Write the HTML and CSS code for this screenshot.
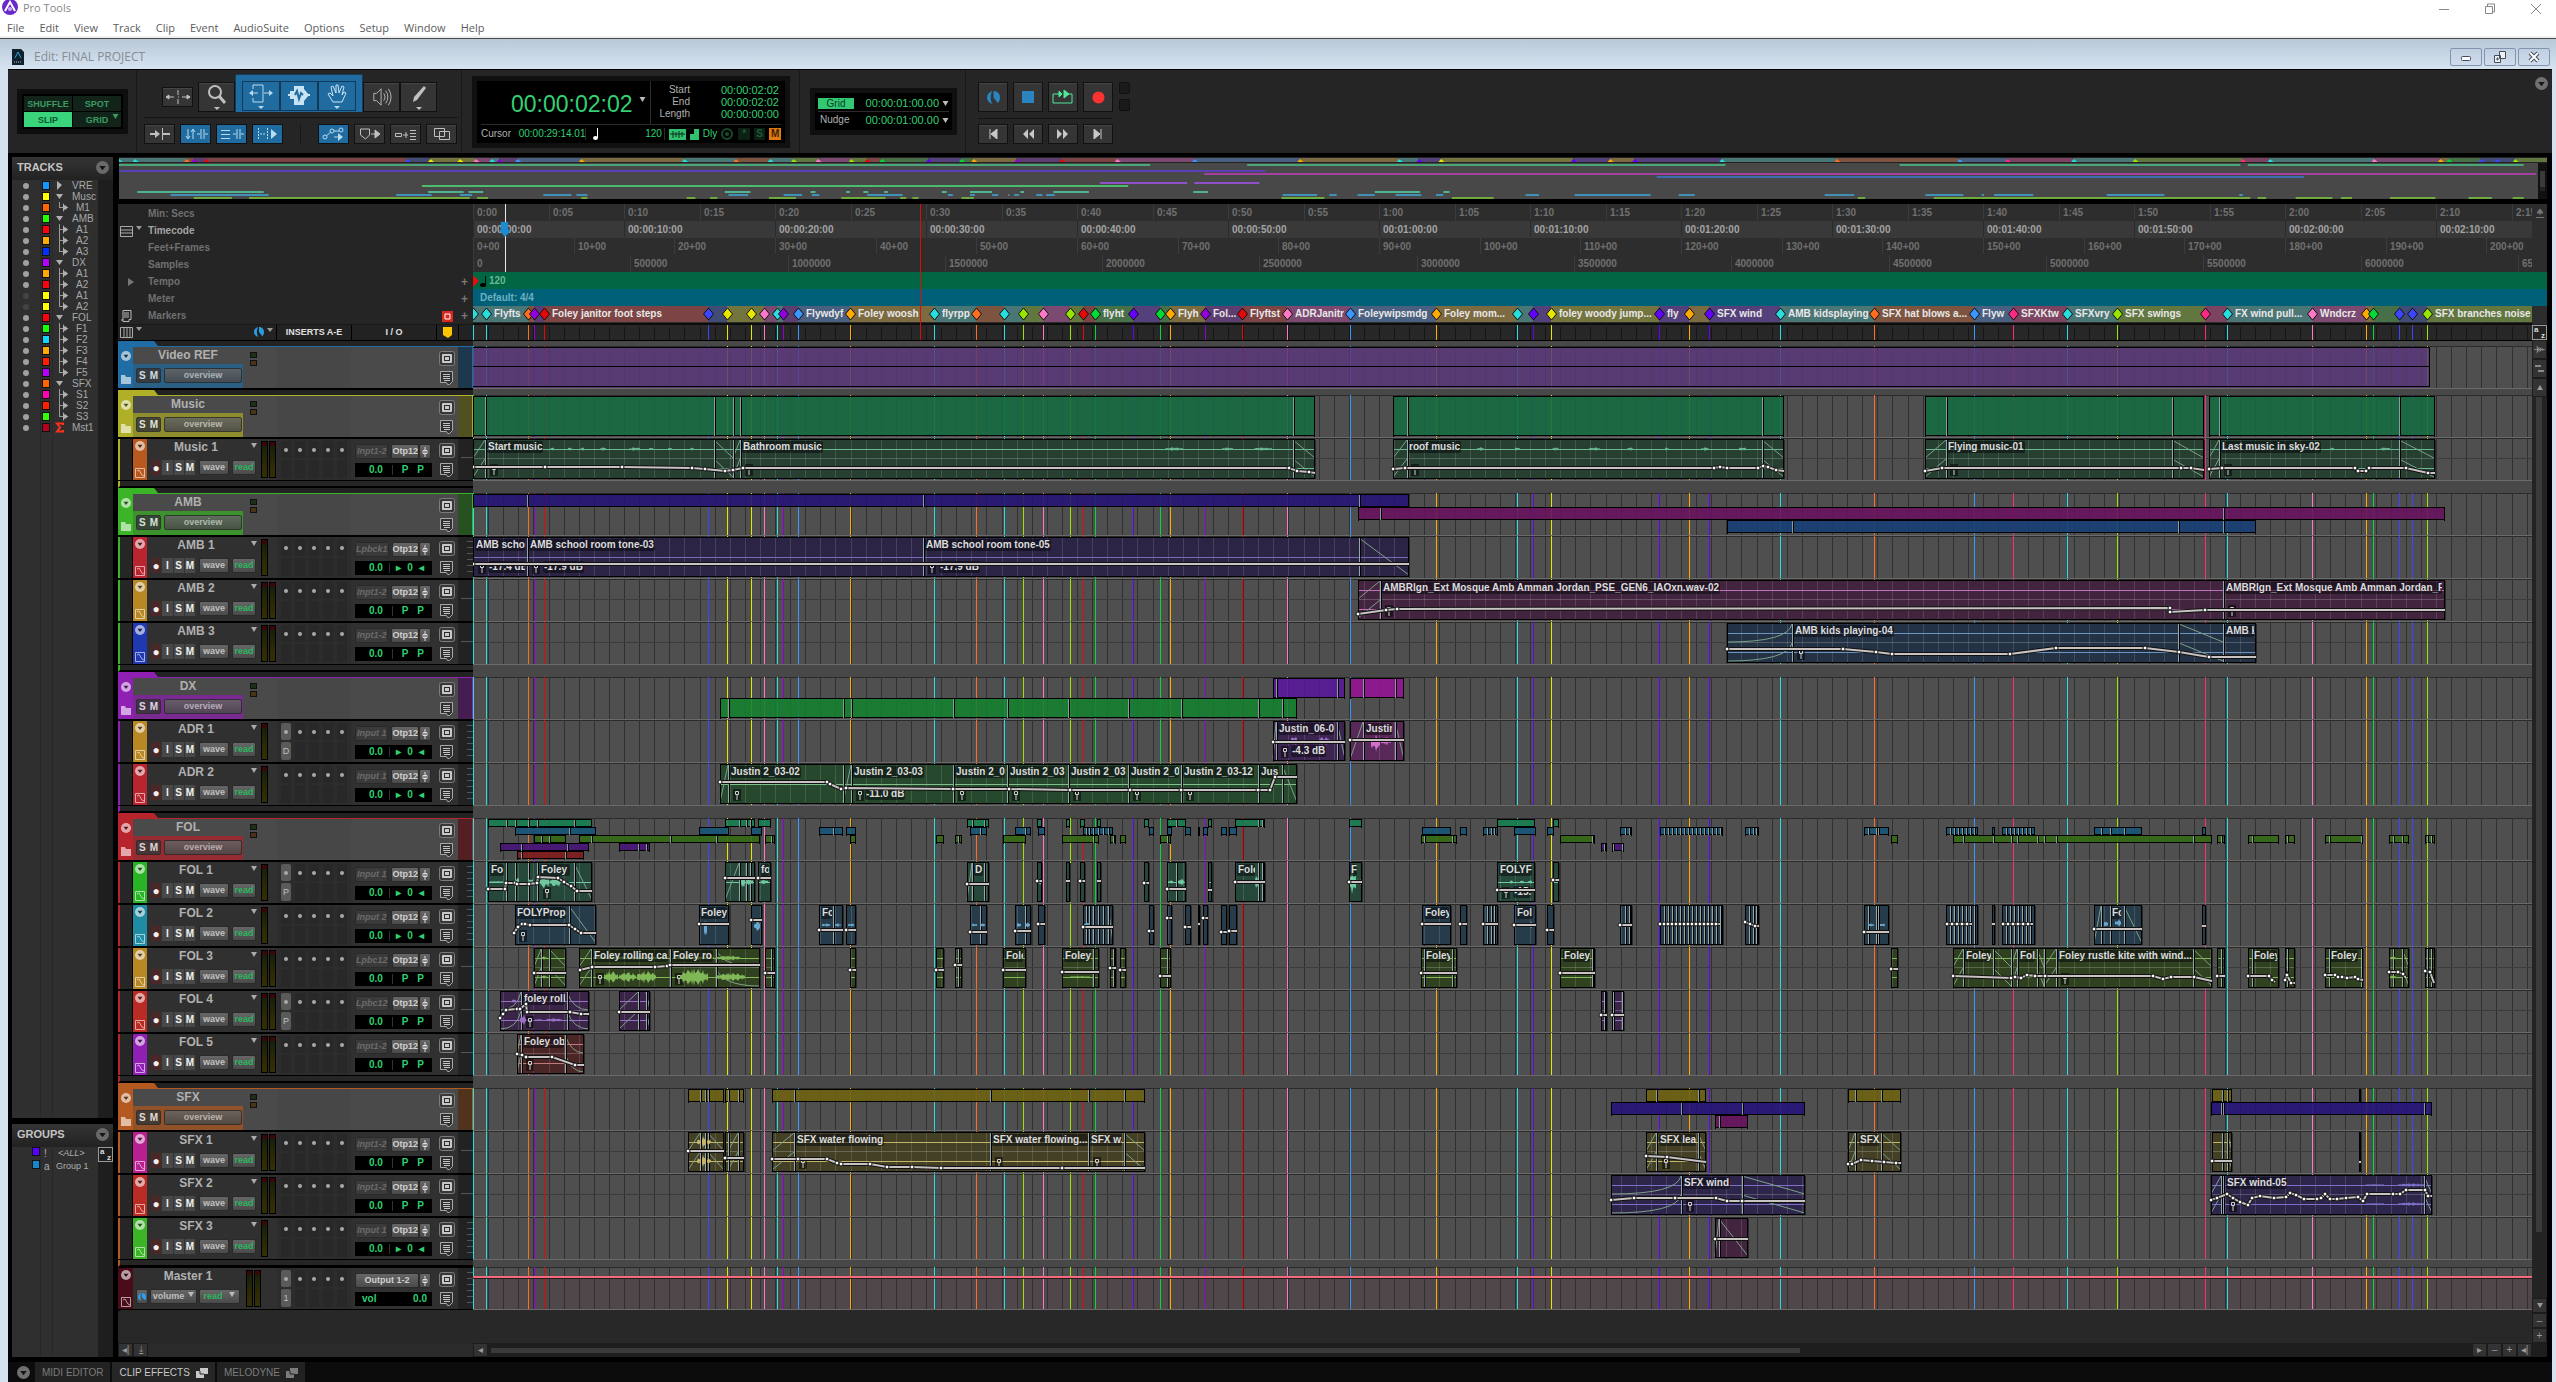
FILE: index.html
```html
<!DOCTYPE html>
<html lang="en">
<head>
<meta charset="utf-8">
<title>Pro Tools - Edit: FINAL PROJECT</title>
<link rel="stylesheet" href="styles.css">
</head>
<body>
<svg class="sprite" aria-hidden="true">
  <symbol id="i-circle" viewBox="0 0 12 12"><circle cx="6" cy="6" r="6" fill="currentColor"/><path d="M3 4.500h6L6 8.500z" fill="#151515"/></symbol>
  <symbol id="i-tri" viewBox="0 0 6 5"><path d="M0 0h6L3 5z" fill="currentColor"/></symbol>
  <symbol id="i-folder" viewBox="0 0 10 10"><path d="M0 1h4l1 2h5v7H0z" fill="currentColor"/></symbol>
  <symbol id="i-auto" viewBox="0 0 10 10"><path d="M.5.5h9v9h-9z M2 3l2-1 3 5 2 1" fill="none" stroke="currentColor"/></symbol>
  <symbol id="i-target" viewBox="0 0 16 15"><rect x=".5" y=".5" width="15" height="14" rx="2" fill="#383838" stroke="#7c7c7c"/><rect x="3" y="3" width="10" height="9" rx="1" fill="#c8c8c8"/><rect x="5.500" y="5.500" width="5" height="4" fill="#c8c8c8" stroke="#2a2a2a"/></symbol>
  <symbol id="i-note" viewBox="0 0 13 14"><path d="M.5.5h12v10l-3 3h-2l-1-2h-6z" fill="#303030" stroke="#a8a8a8"/><path d="M3 3.500h7M3 5.500h7M3 7.500h7M4 9.500h6" stroke="#c4c4c4"/></symbol>
  <symbol id="i-clock" viewBox="0 0 12 12"><path d="M5 0C2 1 0 3 0 6s2 5 5 6C3 9 3 3 5 0zM6 0c4 0 6 3 6 6 0 3-1 4-2 5L6 6z" fill="currentColor"/></symbol>
  <symbol id="i-wave" viewBox="0 0 12 10"><path d="M0 5h12" stroke="currentColor"/><path d="M3 0l3 5-3 5zM6 2l3 3-3 3zM9 3l2 2-2 2z" fill="currentColor"/></symbol>
  <symbol id="i-windows" viewBox="0 0 12 10"><path d="M4 0h8v6H8v4H0V3h4z" fill="currentColor"/><path d="M4 3v3h4" stroke="#222" fill="none"/></symbol>
</svg>

<header class="app-bar">
  <div class="app-title">
    <svg width="16" height="16" viewBox="0 0 16 16"><circle cx="8" cy="7" r="8" fill="#6a28c8"/><path d="M3 11L8 2l5 9" fill="none" stroke="#fff" stroke-width="2"/><circle cx="8" cy="9" r="2" fill="#c8b0ff"/></svg>
    <span>Pro Tools</span>
    <span class="win-controls">
      <button aria-label="Minimize"><svg width="12" height="12"><path d="M1 6.500h10" stroke="#888"/></svg></button>
      <button aria-label="Restore"><svg width="12" height="12"><path d="M1.500 3.500h7v7h-7zM3.500 3V1h7v8H9" fill="none" stroke="#888"/></svg></button>
      <button aria-label="Close"><svg width="12" height="12"><path d="M1 1l10 10M11 1L1 11" stroke="#888"/></svg></button>
    </span>
  </div>
  <nav class="menus">
    <a href="#">File</a><a href="#">Edit</a><a href="#">View</a><a href="#">Track</a><a href="#">Clip</a><a href="#">Event</a><a href="#">AudioSuite</a><a href="#">Options</a><a href="#">Setup</a><a href="#">Window</a><a href="#">Help</a>
  </nav>
</header>

<div class="edit-window">
  <div class="edit-title">
    <svg width="12" height="16" viewBox="0 0 12 16"><path d="M0 0h9l3 3v13H0z" fill="#10202c"/><path d="M3 9l3-6 3 6" fill="none" stroke="#2aa0e0"/><path d="M2 13h8" stroke="#b8c8d8" stroke-dasharray="1 1"/></svg>
    <span>Edit: FINAL PROJECT</span>
    <span class="mdi-controls">
      <button aria-label="Minimize window"><svg width="12" height="12"><rect x="1.500" y="5.500" width="9" height="4" rx="1" fill="#fff" stroke="#444c60"/></svg></button>
      <button aria-label="Restore window"><svg width="12" height="12"><path d="M5.500.5h6v7h-6zM.5 4.500h6v7h-6zM3 7h1v2H3z" fill="#f0f0f0" stroke="#444c60"/></svg></button>
      <button aria-label="Close window"><svg width="12" height="12"><path d="M2 2l8 8M10 2l-8 8" stroke="#444c60" stroke-width="4"/><path d="M2 2l8 8M10 2l-8 8" stroke="#fff" stroke-width="2"/></svg></button>
    </span>
  </div>

  <div class="frame">
    <div class="toolbar">
      <section class="sec sec-modes">
        <div class="modes">
          <button>SHUFFLE</button><button>SPOT</button>
          <button class="on">SLIP</button><button>GRID <svg class="corner" width="7" height="5"><use href="#i-tri"/></svg></button>
        </div>
      </section>
      <section class="sec sec-tools">
        <div class="tool-row">
          <button class="tool small" aria-label="Zoom toggle"><svg width="26" height="16" viewBox="0 0 26 16"><path d="M1 8h8M17 8h8M13 1v5M13 10v5M1 8l3-2v4zM25 8l-3-2v4zM13 8h1" stroke="#c0c0c0" fill="#c0c0c0"/></svg></button>
          <button class="tool" aria-label="Zoomer"><svg width="22" height="26" viewBox="0 0 22 26"><circle cx="9" cy="8" r="6" fill="none" stroke="#c0c0c0" stroke-width="2"/><path d="M13 12l6 7" stroke="#c0c0c0" stroke-width="3"/><path d="M8 23h6l-3 3z" fill="#c0c0c0"/></svg></button>
          <div class="smart">
            <button class="tool" aria-label="Trim"><svg width="26" height="26" viewBox="0 0 26 26"><path d="M5 6V2h10v17H5v-4M2 10h8M16 10h8" fill="none" stroke="#b8d8ec"/><path d="M1 10l4-3v6zM25 10l-4-3v6z" fill="#b8d8ec"/><path d="M10 23h6l-3 3z" fill="#b8d8ec"/></svg></button>
            <button class="tool" aria-label="Selector"><svg width="26" height="26" viewBox="0 0 26 26"><path d="M8 3h10v19H8z" fill="#c8e4f4"/><path d="M2 12h22" stroke="#c8e4f4" stroke-width="2"/><path d="M18 6l5 6-5 6zM4 8h4v8H4z" fill="#c8e4f4"/><path d="M9 12l2-4 2 8 2-6 2 2" stroke="#206ca0" fill="none" stroke-width="2"/></svg></button>
            <button class="tool" aria-label="Grabber"><svg width="24" height="26" viewBox="0 0 24 26"><path d="M8 19l-5-8 2-1 3 3-2-9 2-1 3 7V2h2l1 8 3-7 2 1-2 8 2-3 2 1-4 9z" fill="none" stroke="#c8e4f4"/><path d="M9 23h6l-3 3z" fill="#b8d8ec"/></svg></button>
          </div>
          <button class="tool" aria-label="Scrubber"><svg width="20" height="22" viewBox="0 0 22 24"><path d="M2 8h3l5-5v18l-5-5H2zM13 8q3 4 0 8M15 5q5 7 0 14M18 3q6 9 0 18" fill="none" stroke="#c0c0c0"/></svg></button>
          <button class="tool" aria-label="Pencil"><svg width="20" height="26" viewBox="0 0 20 26"><path d="M4 18l1-5L15 2l2 2L8 16z" fill="#c0c0c0"/><path d="M7 23h6l-3 3z" fill="#c0c0c0"/></svg></button>
        </div>
        <div class="opt-row">
          <button class="opt" aria-label="Tab to transients"><svg width="20" height="12"><path d="M0 6h8M12 6h8" stroke="#c0c0c0" stroke-width="2"/><path d="M5 2l5 4-5 4z" fill="#c0c0c0"/><path d="M12.500 0v12" stroke="#c0c0c0"/></svg></button>
          <button class="opt on" aria-label="Link timeline and edit"><svg width="24" height="12"><path d="M4 1v9M9 2v9M2 8l2 3 2-3M7 4l2-3 2 3M17 1v10M20 1v10M13 6h3M21 6h3" fill="none" stroke="#b8dcf0"/></svg></button>
          <button class="opt on" aria-label="Link track and edit"><svg width="24" height="12"><path d="M1 2.500h9M1 6.500h9M1 10.500h9M17 1v10M20 1v10M13 6h3M21 6h3" fill="none" stroke="#b8dcf0"/></svg></button>
          <button class="opt on" aria-label="Insertion follows playback"><svg width="22" height="12"><path d="M1.500 0v12M3 6h5M10.500 0v12" stroke="#b8dcf0" stroke-dasharray="2 1"/><path d="M14 1l6 5-6 5z" fill="#b8dcf0"/></svg></button>
          <i class="opt-sep"></i>
          <button class="opt on" aria-label="Automation follows edit"><svg width="24" height="14"><circle cx="3" cy="10" r="2" fill="none" stroke="#b8dcf0"/><circle cx="10" cy="4" r="2" fill="none" stroke="#b8dcf0"/><circle cx="19" cy="3" r="2" fill="none" stroke="#b8dcf0"/><path d="M4 9l5-4M12 4h5M12 10h5" stroke="#b8dcf0"/><path d="M16 6l5 4-5 4z" fill="#b8dcf0"/></svg></button>
          <button class="opt" aria-label="Markers follow edit"><svg width="22" height="12"><path d="M1.500 1h9v6l-4 4-5-4z" fill="none" stroke="#c0c0c0"/><path d="M12 6h5M16 2l5 4-5 4z" stroke="#c0c0c0" fill="#c0c0c0"/></svg></button>
          <button class="opt" aria-label="Mirrored editing"><svg width="22" height="12"><path d="M.5 5.500h6v3h-6zM8 7h5M11 4v6M15 2.500h6M15 5.500h6M15 8.500h6M15 11.500h6" fill="none" stroke="#c0c0c0"/></svg></button>
          <button class="opt" aria-label="Layered editing"><svg width="18" height="14"><path d="M1.500 1.500h10v8h-10zM6.500 4.500h10v8h-10z" fill="none" stroke="#c0c0c0"/></svg></button>
        </div>
      </section>
      <section class="sec sec-counter">
        <div class="counter">
          <div class="counter-top">
            <div class="main-time">00:00:02:02<svg width="7" height="5"><use href="#i-tri"/></svg></div>
            <dl class="sel">
              <dt>Start</dt><dd>00:00:02:02</dd>
              <dt>End</dt><dd>00:00:02:02</dd>
              <dt>Length</dt><dd>00:00:00:00</dd>
            </dl>
          </div>
          <div class="counter-bottom">
            <span class="cur">Cursor</span><span class="cur-v">00:00:29:14.01</span>
            <span class="tempo"><svg width="6" height="12"><ellipse cx="2.500" cy="10" rx="2.500" ry="2" fill="#fff"/><path d="M4.500 0v10" stroke="#fff"/></svg><b>120</b></span>
            <svg width="17" height="11"><rect width="17" height="11" fill="#30c070"/><path d="M1 5h15M4 2v7M7 3v5M10 2v7M13 3v5" stroke="#0a3018"/></svg>
            <svg width="9" height="11"><path d="M4 0h5v11H0V5h4z" fill="#30c070"/></svg>
            <span>Dly</span>
            <svg width="13" height="12"><circle cx="6" cy="6" r="5" fill="none" stroke="#184a2c" stroke-width="2"/><circle cx="6" cy="6" r="2" fill="#184a2c"/></svg>
            <span class="chip">*</span><span class="chip">S</span><span class="chip m">M</span>
          </div>
        </div>
      </section>
      <section class="sec sec-grid">
        <div class="gridbox">
          <div><button class="gridbtn">Grid</button><span>00:00:01:00.00</span><svg width="7" height="5"><use href="#i-tri"/></svg></div>
          <div><em>Nudge</em><span>00:00:01:00.00</span><svg width="7" height="5"><use href="#i-tri"/></svg></div>
        </div>
      </section>
      <section class="sec sec-transport">
        <div class="transport">
          <div class="t-row">
            <button aria-label="Online"><svg width="13" height="13" color="#2a84c0"><use href="#i-clock"/></svg></button>
            <button aria-label="Stop"><svg width="12" height="12"><rect width="12" height="12" fill="#2a84c0"/></svg></button>
            <button aria-label="Play"><svg width="24" height="14"><path d="M5 4H2v9h19V4h-3" fill="none" stroke="#50e898"/><path d="M5 4h5M8 1l3 3-3 3zM13 0l5 4-5 4z" fill="#50e898" stroke="#50e898"/></svg></button>
            <button aria-label="Record"><svg width="13" height="13"><circle cx="6.500" cy="6.500" r="6" fill="#ff3232"/></svg></button>
            <span class="leds"><i></i><i></i></span>
          </div>
          <div class="t-row low">
            <button aria-label="Return to zero"><svg width="10" height="10"><path d="M2 0v10M9 0L3 5l6 5z" stroke="#c8c8c8" fill="#c8c8c8"/></svg></button>
            <button aria-label="Rewind"><svg width="12" height="10"><path d="M6 0L1 5l5 5zM12 0L7 5l5 5z" fill="#c8c8c8"/></svg></button>
            <button aria-label="Fast forward"><svg width="12" height="10"><path d="M0 0l5 5-5 5zM6 0l5 5-5 5z" fill="#c8c8c8"/></svg></button>
            <button aria-label="Go to end"><svg width="10" height="10"><path d="M8 0v10M1 0l6 5-6 5z" stroke="#c8c8c8" fill="#c8c8c8"/></svg></button>
          </div>
        </div>
        <svg class="tb-menu" width="13" height="13" color="#707070"><use href="#i-circle"/></svg>
      </section>
    </div>

    <div class="main">
      <aside class="sidebar">
        <h2>TRACKS <svg width="13" height="13"><use href="#i-circle"/></svg></h2>
        <div class="side-list tracks-list"><ul id="track-list"></ul><i class="side-scroll"></i></div>
        <h2 class="groups-h">GROUPS <svg width="13" height="13"><use href="#i-circle"/></svg></h2>
        <div class="side-list groups-list">
          <ul>
            <li><i class="sq" style="background:#5a00ff"></i><span>!</span><em>&lt;ALL&gt;</em></li>
            <li><i class="sq" style="background:#1488cc"></i><span>a</span><b>Group 1</b></li>
          </ul>
          <i class="side-scroll"><span class="az"><sup>a</sup><sub>z</sub></span></i>
        </div>
      </aside>

      <div class="edit">
        <div class="universe" id="universe"></div>
        <div class="rulers" id="rulers">
          <div class="ruler"><div class="rh">Min: Secs</div><div class="rl" data-r="min"></div><div class="re"><svg width="8" height="9"><path d="M4 6V2M1 4l3-4 3 4zM0 8.500h8" stroke="#777" fill="#777"/></svg></div></div>
          <div class="ruler tc"><div class="rh"><svg class="rh-icon" width="22" height="11"><path d="M.5.5h12v10H.5zM1 4h12M1 7h12" fill="none" stroke="#aaa"/><path d="M16 0h6l-3 4z" fill="#999"/></svg>Timecode</div><div class="rl" data-r="tc"></div><div class="re"></div></div>
          <div class="ruler"><div class="rh">Feet+Frames</div><div class="rl" data-r="ft"></div><div class="re"></div></div>
          <div class="ruler"><div class="rh">Samples</div><div class="rl" data-r="sm"></div><div class="re"></div></div>
          <div class="ruler tempo-r"><div class="rh"><svg class="rh-icon" width="22" height="8"><path d="M8 0l6 4-6 4z" fill="#777"/></svg>Tempo<b>+</b></div><div class="rl"><svg width="16" height="14"><path d="M0 1l6 6-6 6z" fill="#e01010"/><ellipse cx="10" cy="11" rx="3" ry="2"/><path d="M12.500 2v9" stroke="#000"/></svg><span>120</span></div><div class="re"></div></div>
          <div class="ruler meter-r"><div class="rh">Meter<b>+</b></div><div class="rl"><span>Default: 4/4</span></div><div class="re"></div></div>
          <div class="ruler mark-r"><div class="rh"><svg class="rh-icon" width="22" height="12" viewBox="0 0 22 12"><path d="M3 .5h8v9H9v2H3zM4 3h5M4 5h5M4 7h5M1 10h2" fill="none" stroke="#bbb"/></svg>Markers<svg class="red" width="11" height="11"><path d="M0 0h11v11H0z" fill="#d82820"/><path d="M3 3h5v5H3z" fill="none" stroke="#fff"/></svg><b>+</b></div><div class="rl" data-r="mk"></div><div class="re"></div></div>
          <i class="playline"></i>
          <div class="cursor"><svg width="14" height="17"><path d="M3 1h7v8h3l-6 7-6-7h2z" fill="#1c8cd0"/></svg></div>
        </div>
        <div class="body">
          <div class="tracks">
            <div class="row cols">
              <div class="hd">
                <div class="c-list"><svg width="22" height="11"><path d="M.5.5h12v10H.5zM4 0v10M7 0v10M10 0v10" fill="none" stroke="#aaa"/><path d="M16 0h6l-3 4z" fill="#999"/></svg><svg width="20" height="10" color="#2c9ce0" viewBox="0 0 20 10"><use href="#i-clock" width="10" height="10"/><path d="M13 1h6l-3 4z" fill="#999"/></svg></div>
                <div class="c-ins">INSERTS A-E</div><div class="c-io">I / O</div>
                <div class="c-flag"><svg width="9" height="11"><path d="M0 0h9v8l-4 3-5-3z" fill="#ffc400"/></svg></div><div class="c-end"></div>
              </div>
              <div class="lane" id="cols-lane"></div>
            </div>
            <div id="track-rows"></div>
            <div class="empty"></div>
          </div>
          <div class="vscroll">
            <span class="az"><sup>a</sup><sub>z</sub></span>
            <button aria-label="Audio zoom"><svg width="11" height="9" color="#888"><use href="#i-wave"/></svg></button>
            <button aria-label="MIDI zoom"><svg width="11" height="9"><path d="M1 2h6M4 7h6" stroke="#888" stroke-width="2"/></svg></button>
            <button aria-label="Scroll up"><svg width="6" height="5"><path d="M0 5h6L3 0z" fill="#999"/></svg></button>
            <i class="thumb"></i>
            <button aria-label="Scroll down"><svg width="6" height="5" color="#999"><use href="#i-tri"/></svg></button>
            <button aria-label="Track zoom out">–</button><button aria-label="Track zoom in">+</button>
          </div>
        </div>
        <div class="hscroll">
          <div class="hs-left"><button aria-label="Hide columns">◂|</button><button aria-label="Fit tracks">⤓</button></div>
          <button aria-label="Scroll left">◂</button>
          <i class="track"><i></i></i>
          <button aria-label="Scroll right">▸</button><button aria-label="Zoom out">–</button><button aria-label="Zoom in">+</button><button aria-label="Fit">◂|</button><i class="corner-box"></i>
        </div>
      </div>
    </div>

    <footer class="dock">
      <svg width="13" height="13" color="#707070"><use href="#i-circle"/></svg>
      <button>MIDI EDITOR</button>
      <button class="active">CLIP EFFECTS <svg width="12" height="10"><use href="#i-windows"/></svg></button>
      <button>MELODYNE <svg width="12" height="10"><use href="#i-windows"/></svg></button>
    </footer>
  </div>
</div>
<script src="app.js"></script>
</body>
</html>
```

FILE: styles.css
```css
* { box-sizing: border-box; }
body {
  margin: 0; min-height: 100vh; display: flex; flex-direction: column;
  background: #000; color: #b0b0b0;
  font: 10px/12px "Liberation Sans", Arial, sans-serif;
}
button { font: inherit; color: inherit; background: none; border: 0; padding: 0; margin: 0; }
a { color: inherit; text-decoration: none; }
ul, dl, dd, h2 { margin: 0; padding: 0; list-style: none; }
svg { display: block; flex: none; }
em, i { font-style: normal; }
.sprite { position: absolute; width: 0; height: 0; }

/* application bar */
.app-bar { background: #fff; color: #5c5c5c; font: 11px/16px "Open Sans", sans-serif; border-bottom: 1px solid #484848; box-shadow: inset 0 -2px #f0f0f0; height: 39px; }
.app-title { display: flex; gap: 5px; padding-left: 2px; height: 17px; color: #888; }
.win-controls { margin-left: auto; display: flex; gap: 34px; padding-right: 14px; }
.menus { display: flex; gap: 15px; padding: 3px 7px; }

/* edit window */
.edit-window { flex: 1; display: flex; flex-direction: column; background: #d4e2f0; padding: 0 4px 0 8px; }
.edit-title { height: 30px; margin: 0 -4px 0 -8px; padding: 6px 6px 0 12px; display: flex; align-items: center; gap: 10px; background: linear-gradient(#b9c8d6, #d6e4f2); color: #858c94; font: 12px/16px "Open Sans", sans-serif; }
.mdi-controls { margin-left: auto; display: flex; gap: 2px; }
.mdi-controls button { width: 32px; height: 18px; border: 1px solid #8494b0; border-radius: 2px; display: grid; place-items: center; background: linear-gradient(#c0cfe0, #cfdced); }
.frame { flex: 1; display: flex; flex-direction: column; background: #000; border-top: 1px solid #000; }

/* toolbar */
.toolbar { display: flex; height: 83px; background: #252525; }
.sec { border-right: 1px solid #181818; }
.sec-modes { width: 129px; padding: 19px 8px 0 9px; }
.modes { display: grid; grid-template-columns: 1fr 1fr; gap: 1px; height: 45px; padding: 2px; border: 5px solid #0e0e0e; background: #000; font: bold 9px/14px "Liberation Sans", sans-serif; color: #3a9a62; }
.modes button { background: #12241a; position: relative; }
.modes .on { background: #3ad47c; color: #0c5a30; }
.modes .corner { position: absolute; right: 2px; top: 2px; }
.sec-tools { width: 325px; padding: 4px 3px 0 7px; }
.tool-row { display: flex; align-items: flex-end; height: 38px; padding-left: 18px; }
.tool, .opt, .transport button { border: 1px solid #111; background: #353535; display: grid; place-items: center; box-shadow: inset 0 1px #454545; }
.tool { height: 30px; width: 37px; }
.tool.small { width: 31px; height: 20px; margin: 0 5px 5px 0; }
.smart { display: flex; background: #206ca0; border: 1px solid #143c58; border-bottom: 0; padding: 6px 6px 0; border-radius: 2px 2px 0 0; height: 38px; }
.smart .tool { background: #206ca0; box-shadow: none; border-color: #123a58; width: 38px; }
.opt-row { display: flex; gap: 5px; border-top: 1px solid #151515; margin-top: 5px; padding-top: 6px; }
.opt { width: 31px; height: 20px; }
.opt.on { background: #206ca0; box-shadow: none; }
.opt-sep { width: 25px; background: linear-gradient(#181818, #181818) center / 1px 100% no-repeat; }
.sec-counter { width: 338px; padding: 6px 9px 0 10px; }
.counter { border: 5px solid #101010; background: #000; height: 72px; color: #34d074; padding: 0 4px; }
.counter-top { display: flex; height: 44px; border-bottom: 1px solid #2c2c2c; }
.main-time { width: 170px; border-right: 1px solid #2c2c2c; padding: 2px 0 0 30px; font-size: 23px; line-height: 44px; display: flex; align-items: center; gap: 6px; }
.main-time svg { color: #bbb; margin-top: -8px; }
.sel { flex: 1; display: grid; grid-template-columns: 39px 1fr; font-size: 11px; line-height: 12px; padding: 3px 2px 0 0; align-content: start; }
.sel dt { color: #b0b0b0; font-size: 10px; text-align: right; }
.sel dd { text-align: right; }
.counter-bottom { display: flex; align-items: center; gap: 4px; height: 18px; font-size: 10px; }
.cur { color: #b0b0b0; width: 35px; }
.cur-v { width: 70px; border-right: 1px solid #2c2c2c; }
.tempo { width: 77px; display: flex; justify-content: space-between; border-right: 1px solid #2c2c2c; padding: 0 2px 0 3px; }
.tempo b { font-weight: normal; }
.chip { width: 12px; text-align: center; background: #0c2014; color: #1c5c34; font-weight: bold; }
.chip.m { background: #e07a10; color: #402000; }
.sec-grid { width: 166px; padding: 18px 8px 0 10px; }
.gridbox { border: 5px solid #101010; background: #000; height: 47px; padding: 2px 3px; color: #34d074; font-size: 11px; }
.gridbox div { display: grid; grid-template-columns: 36px 1fr 10px; align-items: center; height: 16px; }
.gridbox div + div { border-top: 1px solid #2c2c2c; height: 17px; }
.gridbox span { text-align: right; }
.gridbox svg { color: #bbb; justify-self: end; }
.gridbox em { color: #b0b0b0; font-size: 10px; padding-left: 2px; }
.gridbtn { background: #34c874; color: #064020; font-size: 10px; line-height: 11px; }
.sec-transport { flex: 1; border: 0; display: flex; justify-content: space-between; padding: 12px 4px 0 12px; }
.t-row { display: flex; gap: 5px; }
.transport button { width: 30px; height: 30px; }
.t-row.low { border-top: 1px solid #151515; margin: 6px 17px 0 0; padding-top: 5px; }
.t-row.low button { height: 20px; }
.leds { display: grid; gap: 3px; margin-left: 1px; }
.leds i { width: 11px; height: 12px; border: 1px solid #101010; background: #1a1a1a; border-radius: 2px; }
.tb-menu { margin-top: -5px; }

/* main split */
.main { flex: 1; display: flex; padding: 4px 5px 5px 4px; gap: 5px; }
.sidebar { width: 101px; display: flex; flex-direction: column; }
.sidebar h2 { display: flex; align-items: center; justify-content: space-between; height: 23px; padding: 0 4px 3px 5px; font-size: 11px; color: #c4c4c4; background: linear-gradient(#343434, #222); }
.sidebar h2 svg { color: #6a6a6a; }
.sidebar .groups-h { margin-top: 6px; }
.side-list { display: flex; background: #2f2f2f; }
.side-list ul { flex: 1; min-width: 0; background: linear-gradient(90deg, transparent 28px, #282828 28px, #282828 29px, transparent 29px, transparent 40px, #282828 40px, #282828 41px, transparent 41px); }
.tracks-list { flex: 1; }
.side-scroll { width: 15px; background: #1e1e1e; }
.tracks-list li { display: flex; align-items: center; height: 11px; padding-left: 11px; line-height: 11px; color: #a8a8a8; }
.tracks-list .dot { width: 6px; height: 6px; border-radius: 3px; background: #a0a0a0; margin-right: 13px; }
.tracks-list .dim { background: #444; }
.sq { width: 8px; height: 9px; border: 1px solid #111; flex: none; }
.tracks-list svg { width: 14px; height: 11px; margin: 0 4px 0 4px; }
.tracks-list .child { margin-left: 4px; }
.groups-list { height: 210px; }
.groups-list li { display: flex; gap: 4px; height: 13px; line-height: 13px; padding-left: 20px; }
.groups-list li span { width: 8px; }
.groups-list li b { font-weight: normal; font-size: 9px; white-space: nowrap; }
.groups-list li em { font-style: italic; font-size: 9px; padding-left: 2px; }
.az { display: block; width: 15px; height: 15px; border: 1px solid #999; font: bold 8px/7px "Liberation Sans", sans-serif; color: #ddd; position: relative; flex: none; }
.az sup, .az sub { position: absolute; font-size: 8px; line-height: 7px; }
.az sup { left: 1px; top: 0; }
.az sub { right: 1px; bottom: 0; }

.edit { flex: 1; min-width: 0; display: flex; flex-direction: column; }
.universe { height: 42px; position: relative; background: #484848; margin-left: 1px; }
.universe svg { width: 100%; height: 42px; }
.uscroll { position: absolute; right: 0; top: 6px; bottom: 0; width: 9px; background: #222; border: 1px solid #111; border-width: 8px 2px; }
.uscroll::before { content: ""; display: block; height: 16px; background: #3a3a3a; }

/* rulers */
.rulers { position: relative; margin-top: 5px; }
.ruler { display: grid; grid-template-columns: 355px 1fr 15px; height: 17px; font: bold 10px/16px "Liberation Sans", sans-serif; color: #707070; }
.rh { display: flex; align-items: center; padding: 2px 0 0 30px; background: #252525; border-bottom: 1px solid #181818; position: relative; }
.rh-icon { position: absolute; left: 2px; }
.rh b { margin-left: auto; padding-right: 5px; color: #777; font-size: 12px; line-height: 12px; }
.rh .red { margin-left: auto; margin-right: 8px; }
.rh .red + b { margin-left: 0; }
.rl { position: relative; overflow: hidden; background: #2d2d2d; border-bottom: 1px solid #232323; }
.re { background: #2d2d2d; border-bottom: 1px solid #232323; display: grid; place-items: center; }
.tick { position: absolute; top: 0; height: 16px; line-height: 18px; border-left: 1px solid #3c3c3c; padding-left: 3px; white-space: nowrap; }
.tc .rl { background: #393939; }
.tc, .tc .tick { color: #a4a4a4; border-color: #2a2a2a; }
.tempo-r .rl, .tempo-r .re { background: #006644; border-color: #00503a; }
.meter-r .rl, .meter-r .re { background: #006078; border-color: #004a5c; }
.tempo-r .rl { display: flex; align-items: center; color: #6ab894; }
.meter-r .rl { padding-left: 7px; line-height: 18px; color: #6cb0c0; }
.mk { position: absolute; top: 0; height: 16px; color: #e8e8e8; white-space: nowrap; overflow: hidden; padding-left: 8px; }
.dia { position: absolute; top: 2px; }
.playline { position: absolute; left: 802px; top: 0; width: 1px; height: 136px; background: #e00808; z-index: 3; }
.cursor { position: absolute; left: 380px; top: 0; width: 14px; height: 68px; padding-top: 17px; background: linear-gradient(#e8e8e8, #e8e8e8) 7px 0 / 1px 100% no-repeat; }

/* track rows */
.body { flex: 1; display: flex; }
.tracks { flex: 1; min-width: 0; display: flex; flex-direction: column; }
.row { display: grid; grid-template-columns: 355px 1fr; height: 43px; }
.hd { display: flex; height: 42px; background: #303030; overflow: hidden; }
.lane { position: relative; overflow: hidden; background: #4f4f4f; height: 43px; border-bottom: 1px solid #6a6a6a; }
.lane svg { position: absolute; left: 0; top: 0; width: 100%; height: 100%; }
.cols { height: 18px; }
.cols .hd, .cols .lane { height: 17px; }
.cols .lane { background: #272727; border: 0; border-top: 2px solid #0c0c0c; }
.cols .hd { background: #000; gap: 1px; padding-top: 1px; font: bold 9px/16px "Liberation Sans", sans-serif; color: #e0e0e0; text-align: center; }
.cols .hd div { background: #222; }
.c-list { width: 158px; display: flex; justify-content: space-between; align-items: center; padding: 0 2px; }
.c-ins { width: 74px; } .c-io { width: 84px; }
.c-flag { width: 21px; display: grid; place-items: center; }
.c-end { flex: 1; }
.tabrow { display: grid; grid-template-columns: 355px 1fr; height: 5px; }
.tabrow > i { background: #222; }
.tabrow > i::before { content: ""; display: block; width: 40px; height: 5px; background: var(--c); clip-path: polygon(0 0, 36px 0, 40px 5px, 0 5px); }
.tabrow > b, .footrow > b { background: #484848; }
.footrow { display: grid; grid-template-columns: 355px 1fr; height: 7px; }
.footrow > i { background: #262626; border-left: 2px solid var(--c); border-bottom: 2px solid #000; }
.gap1 { height: 1px; background: linear-gradient(90deg, #000 355px, #484848 355px); }
.strip { width: 15px; background: var(--c); display: flex; flex-direction: column; justify-content: space-between; align-items: center; padding: 4px 0 4px; }
.strip svg { opacity: .6; color: #fff; }
.trk .strip { width: 14px; padding: 2px 0; }
.fold .hd { background: #4a4a4a; border-top: 1px solid var(--c); }
.fname { width: 110px; text-align: center; }
.fname h3, .tname h3 { margin: 0; font-size: 12px; line-height: 17px; color: #b0b0b0; }
.fpanel { background: color-mix(in srgb, var(--c) 70%, #404040); height: 24px; padding: 4px 1px 4px 3px; display: flex; gap: 3px; }
.btn { background: linear-gradient(#666, #4a4a4a); border: 1px solid #2a2a2a; border-radius: 2px; color: #c0c0c0; font: bold 9px/13px "Liberation Sans", sans-serif; height: 15px; }
.fpanel .btn { opacity: .85; }
.sm { width: 25px; display: flex; gap: 4px; justify-content: center; color: #fff; background: #383838; font-size: 10px; }
.sm button { color: #f0f0f0; }
.ov { flex: 1; }
.fsq { width: 34px; padding: 5px 0 0 7px; display: grid; gap: 2px; align-content: start; }
.fsq i { width: 7px; height: 6px; border: 1px solid #111; background: #1c3018; }
.fsq i + i { background: #4a3418; }
.fins { width: 74px; background: #474747; }
.fio { width: 84px; }
.icons { width: 23px; display: grid; place-items: center; align-content: space-between; padding: 4px 0 3px; }
.tint { width: 15px; background: color-mix(in srgb, var(--c) 35%, #1c1c1c); border-right: 1px solid var(--c); }
.grp { width: 15px; background: #262626; border-left: 2px solid var(--c); border-right: 1px solid #000; }
.trk .hd { border-top: 1px solid #000; height: 42px; }
.tname { width: 112px; position: relative; }
.tname h3 { padding-right: 14px; text-align: center; line-height: 17px; }
.tname > svg { position: absolute; right: 2px; top: 4px; color: #aaa; }
.btns { display: flex; gap: 3px; padding: 4px 0 0 4px; }
.rism { display: flex; width: 45px; background: #484848; border-radius: 2px; height: 15px; color: #f0f0f0; font: bold 10px/14px "Liberation Sans", sans-serif; }
.rism button { flex: 1; border-right: 1px solid #333; }
.rism .rec { background: #4a2828; font-size: 12px; }
.wv { width: 30px; } .rd { width: 24px; padding: 0; }
.btns .rd, .btns .mrd { color: #2cb860; }
.meter { width: 18px; padding: 2px 0 0 2px; display: flex; gap: 1px; }
.meter i { width: 7px; height: 37px; border: 1px solid #000; background: linear-gradient(#380808 4px, #18200a 4px, #2c2a04 22px, #343004); }
.ins { width: 74px; display: grid; grid-template-columns: repeat(5, 14px); grid-template-rows: 17px 18px; gap: 2px 0; padding: 2px 2px; background: #2c2c2c; }
.ins i { margin: 0 2px; background: #282828; border-radius: 2px; display: grid; place-items: center; color: #c0c0c0; font-size: 9px; }
.ins i::before { content: ""; width: 4px; height: 4px; border-radius: 2px; background: #a8a8a8; }
.ins i:nth-child(n+6)::before { display: none; }
.ins .used { background: #5a5a5a; }
.io { width: 84px; padding: 5px 4px 0; }
.io div { display: flex; }
.io .in { width: 35px; color: #6a6a6a; background: #3a3a3a; font-style: italic; margin-right: 3px; padding: 0; }
.io .out { width: 28px; font-weight: bold; color: #d0d0d0; padding: 0; }
.io .fd { width: 12px; padding: 1px 2px; color: #e0e0e0; }
.io .disp { background: #000; color: #2ed070; font: bold 10px/14px "Liberation Sans", sans-serif; height: 14px; margin-top: 4px; width: 77px; justify-content: space-between; padding: 0 8px 0 14px; }
.disp u { text-decoration: none; width: 1px; background: #333; margin: 2px 0; }
.scale { width: 15px; background: repeating-linear-gradient(#555 0 1px, transparent 1px 6px) right 4px / 6px 34px no-repeat #222; }
.scale.st { background: linear-gradient(#555, #555) right 18px / 12px 1px no-repeat #222; }
.master .strip { width: 15px; }
.master .tname { width: 126px; }
.master .tname h3 { padding-right: 16px; }
.master .tname > svg { display: none; }
.master .btns { padding-left: 3px; gap: 2px; }
.master .meter { padding-left: 0; margin-left: -13px; width: 31px; }
.master .out { width: 65px; }
.master .disp { padding: 0 5px 0 7px; }
.clock { width: 12px; padding: 2px 1px; }
.btns .clock { color: #2ca0f0; }
.vol { width: 47px; display: flex; justify-content: space-around; } .mrd { width: 41px; display: flex; justify-content: space-around; }
.vol svg, .mrd svg { color: #bbb; margin-top: 2px; }
.lab, .db { position: absolute; top: 3px; height: 12px; padding: 0 1px; background: rgba(10, 10, 14, .55); border-radius: 2px; color: #dcdcdc; font: bold 10px/12px "Liberation Sans", sans-serif; white-space: nowrap; overflow: hidden; }
.db { top: 25px; }
.empty { flex: 1; background: #282828; border-radius: 3px 0 0 0; }
.vscroll { width: 15px; background: #232323; display: flex; flex-direction: column; padding-top: 2px; }
.vscroll button, .hscroll button { background: #333; color: #999; display: grid; place-items: center; flex: none; border: 1px solid #1c1c1c; font-size: 10px; line-height: 12px; }
.vscroll button { height: 19px; width: 15px; }
.vscroll button:nth-last-child(-n+3) { height: 15px; }
.thumb { flex: 1; margin: 0 5px 66px 4px; background: #3a3a3a; }
.hscroll { display: flex; height: 14px; background: #1e1e1e; }
.hscroll button { width: 15px; }
.hs-left { width: 355px; display: flex; background: #2a2a2a; }
.track { flex: 1; padding: 5px 0; }
.track i { display: block; height: 5px; width: 66%; background: #3a3a3a; margin-left: 3px; }
.corner-box { width: 15px; }
.dock { display: flex; height: 20px; background: #0c0c0c; padding-left: 9px; align-items: center; font-size: 10px; gap: 2px; color: #7c7c7c; }
.dock button { display: flex; align-items: center; gap: 6px; height: 20px; padding: 1px 7px 0; background: #222; }
.dock > svg { margin-right: 3px; }
.dock .active { color: #c8c8c8; background: #262626; }
```

FILE: app.js
```js
const ORIGIN = 473, PPS = 15.1;
const C = { cy: '#26dede', or: '#ff6e1e', pu: '#9200e0', re: '#e60808', bl: '#3c46ff', ye: '#e6e600', pk: '#ff78c8', lb: '#3c96ff', am: '#ffaa00', li: '#96e600', gr: '#00dc32', vi: '#6400ff', hp: '#ff2882' };
const M = { cy: '#4a7676', or: '#7c5440', pu: '#5c3f70', re: '#7c4444', bl: '#404c74', ye: '#74743f', pk: '#7c4a70', lb: '#4a6080', am: '#7c6a40', li: '#627640', gr: '#487048', vi: '#54407a', hp: '#7c4460' };
const markers = [[473,'cy'],[486,'cy','Flyfts'],[528,'or'],[534,'pu'],[544,'re','Foley janitor foot steps'],[708,'bl'],[727,'ye'],[751,'ye'],[764,'pk'],[777,'cy'],[783,'pu'],[798,'lb','Flywdyf'],[850,'am','Foley woosh'],[934,'cy','flyrpp'],[976,'or'],[1004,'cy'],[1023,'li'],[1043,'pk'],[1070,'li'],[1083,'re'],[1095,'gr','flyht'],[1133,'vi'],[1160,'gr'],[1170,'am','Flyh'],[1205,'pu','Fol...'],[1242,'re','Flyftst'],[1287,'pk','ADRJanitr'],[1350,'lb','Foleywipsmdg'],[1436,'am','Foley mom...'],[1517,'cy'],[1533,'vi'],[1551,'ye','foley woody jump...'],[1659,'vi','fly'],[1689,'am'],[1709,'vi','SFX wind'],[1780,'cy','AMB kidsplaying'],[1874,'or','SFX hat blows a...'],[1974,'lb','Flyw'],[2013,'hp','SFXKtw'],[2067,'cy','SFXvry'],[2117,'li','SFX swings'],[2205,'hp'],[2227,'cy','FX wind pull...'],[2312,'pk','Wndcrz'],[2366,'am'],[2373,'gr'],[2399,'bl'],[2412,'bl'],[2427,'li','SFX branches noise']];

const every = (a, b, s) => { const r = []; for (let x = a + s; x < b - 1; x += s) r.push(Math.round(x)); return r; };
// clip: [start, end, splits, labels [x, text, end, pin], automation (height or points), fades [a, b, kind], dB tags]
const music = { n: 'Music 1', c: '#b85a20', in: 'Inpt1-2', st: 1, f: '#166a40', t: '#263f31', w: '#68b892', u: '#48a678', clips: [
  [473,1315,[485,714,733,740,1293],[[488,'Start music',0,1],[743,'Bathroom music',0,1]],[[473,29],[545,29],[622,29],[692,30],[705,31],[725,33],[733,32],[743,30],[1289,30],[1297,33],[1309,34],[1315,35]],[[473,485,'i'],[714,733,'o'],[733,740,'i'],[1293,1315,'o']]],
  [1393,1784,[1407,1762],[[1409,'roof music',0,1]],[[1393,31],[1405,30],[1714,30],[1720,29],[1727,30],[1758,30],[1763,28],[1768,29],[1776,32],[1784,33]],[[1393,1407,'i'],[1762,1784,'o']]],
  [1925,2204,[1946,2172],[[1948,'Flying music-01',0,1]],[[1925,33],[1942,30],[2181,30],[2191,30],[2204,32]],[[1925,1946,'i'],[2172,2204,'o']]],
  [2209,2435,[2219,2399],[[2222,'Last music in sky-02',0,1]],[[2209,31],[2222,30],[2355,30],[2358,33],[2366,33],[2369,30],[2406,30],[2428,35],[2435,35]],[[2209,2219,'i'],[2399,2434,'o']]]],
  blobs: [[550,554,2,11],[568,572,2,11],[580,584,2,11],[600,606,2,11],[629,640,2,11],[649,653,2,11],[668,672,2,11],[690,694,2,11],[1165,1183,2,11],[1222,1233,2,11],[1254,1272,2,11],[1477,1484,2,11],[1515,1520,2,11],[1552,1559,2,11],[1589,1600,2,11],[1627,1633,2,11],[1665,1669,2,11],[1701,1709,2,11],[1739,1746,2,11],[2330,2334,2,11],[2380,2390,2,11]] };
const amb = [
  { n: 'AMB 1', c: '#b82430', in: 'Lpbck1', f: '#261474', t: '#2c2444', w: '#7868b8', u: '#5a40b4', clips: [[473,1409,[527,923,1359],[[476,'AMB scho',526,1],[530,'AMB school room tone-03',0,1],[926,'AMB school room tone-05',0,1]],28,[[1359,1409,'o']],[[489,'-17.4 dB',526],[544,'-17.9 dB'],[940,'-17.9 dB']]]] },
  { n: 'AMB 2', c: '#b88824', in: 'Inpt1-2', st: 1, f: '#68125e', t: '#42243f', w: '#c070b8', u: '#a440a0', clips: [[1358,2445,[1380,2223],[[1383,'AMBRlgn_Ext Mosque Amb Amman Jordan_PSE_GEN6_IAOxn.wav-02',0,1],[2226,'AMBRlgn_Ext Mosque Amb Amman Jordan_P',2443,1]],[[1358,35],[1386,31],[1397,30],[2170,29],[2170,33],[2205,31],[2445,31]],[[1358,1380,'i']]]] },
  { n: 'AMB 3', c: '#2038b0', in: 'Inpt1-2', st: 1, f: '#163e74', t: '#243246', w: '#6c94c0', u: '#3c6cb4', clips: [[1727,2256,[1792,2178,2223],[[1795,'AMB kids playing-04',0,1],[2226,'AMB k',2255]],[[1727,27],[1843,27],[1876,30],[1892,32],[2010,32],[2056,26],[2145,26],[2179,30],[2209,35],[2256,35]],[[1727,1792,'ci'],[2179,2223,'o']]]] }];
const dx = [
  { n: 'ADR 1', c: '#b88824', in: 'Input 1', ins: 'D', f: '#581898', t: '#3c2450', w: '#a070d0', u: '#9050c8', noline: 1, clips: [[1273,1345,[1276,1337],[[1279,'Justin_06-0',1335,1]],22,[[1273,1276,'i'],[1337,1345,'o']],[[1292,'-4.3 dB']]],
    [1350,1404,[1363,1395],[[1366,'Justin',1393]],20,[[1350,1363,'i'],[1395,1404,'o']],[],{ f: '#941494', t: '#582858' }]], blobs: [[1291,1297,6,21],[1318,1330,5,21],[1371,1380,9,23,'#d070c8'],[1381,1391,5,21,'#d070c8']] },
  { n: 'ADR 2', c: '#b82430', in: 'Input 1', f: '#168030', t: '#26482c', w: '#80c088', u: '#4cbc6c', clips: [[720,1297,[728,843,851,953,1007,1068,1128,1181,1258,1282],[[731,'Justin 2_03-02',0,1],[854,'Justin 2_03-03',0,1],[956,'Justin 2_0',1006,1],[1010,'Justin 2_03',1067,1],[1071,'Justin 2_03',1127,1],[1131,'Justin 2_0',1180,1],[1184,'Justin 2_03-12',0,1],[1261,'Jus',1281]],[[720,19],[827,19],[830,21],[841,26],[846,25],[953,26],[1009,26],[1070,27],[1130,27],[1181,27],[1258,27],[1270,27],[1275,14],[1297,14]],[[720,728,'i'],[843,851,'i'],[1282,1297,'o']],[[866,'-11.0 dB']]]], blobs: [[732,745,1,21],[758,766,1,21],[770,790,1,21],[815,825,1,21]] }];
const fol = [
  { n: 'FOL 1', c: '#28b424', in: 'Input 1', ins: 'P', f: '#168050', t: '#26483a', w: '#70c8a0', u: '#50b48c', clips: [
    [488,592,[506,515,528,537,574],[[491,'Fo',505],[541,'Foley .',571,1]],[[488,28],[505,28],[506,22],[515,22],[517,23],[529,23],[537,22],[538,16],[558,17],[564,21],[571,25],[577,30],[592,30]],[[574,592,'o']]],
    [725,755,[739,746,750],[],17,[[725,739,'i']]],[758,771,[],[[761,'fol',770]],17],[967,989,[972,984],[[975,'D',984]],23,[[967,972,'i']]],[1037,1042,[],[],20],[1066,1070,[],[],20],[1080,1085,[],[],20],[1097,1101,[],[],20],[1144,1149,[],[],22],[1167,1186,[1176],[],28],[1208,1212,[],[],29],[1235,1265,[1258,1262],[[1238,'Fole',1256]],21],[1349,1362,[],[[1351,'Fo',1358]],21],[1497,1535,[],[[1500,'FOLYF',1533,1]],29,[],[[1514,'-15.',1532]]],[1553,1559,[],[],19]],
    blobs: [[490,503,1,21],[515,519,6,21],[529,533,5,21],[540,549,8,21],[550,562,6,21],[741,745,7,21],[747,753,4,21],[761,768,3,21],[1039,1041,5,21],[1168,1173,2,21],[1178,1184,4,21],[1255,1258,7,21],[1350,1356,14,21],[1357,1361,5,21],[1510,1513,2,21],[1520,1524,2,21],[1528,1532,2,21]] },
  { n: 'FOL 2', c: '#208ca4', in: 'Input 2', f: '#165478', t: '#263c4a', w: '#68a8d0', u: '#4090b8', noline: 1, clips: [
    [515,596,[569],[[517,'FOLYProp',567,1]],[[514,29],[518,23],[522,20],[525,20],[530,21],[569,21],[575,25],[581,29],[596,29]],[[569,596,'o']]],
    [699,729,[],[[701,'Foley',728]],20],[751,762,[],[],16],[819,843,[833],[[822,'Fo',833]],26],[846,856,[],[],26],[970,987,[980],[],28],[1015,1031,[1025],[],27],[1038,1045,[],[],20],[1083,1113,[1086,1089,1093,1098,1103,1108],[],23,[[1108,1113,'o']]],[1149,1154,[],[],27],[1167,1172,[],[],14],[1185,1191,[],[],23],[1198,1200,[],[],20],[1203,1208,[],[],14],[1221,1227,[],[],28],[1229,1237,[],[],27],[1422,1451,[],[[1425,'Foley',1450]],20],[1460,1467,[],[],20],[1483,1498,[1487,1491,1494],[],20],[1514,1536,[],[[1517,'Fol',1534]],21],[1547,1554,[],[],26],[1620,1632,[1625,1629],[],21],[1660,1723,every(1660,1723,4),[],every(1656,1724,4).map(x => [x,20])],[1745,1759,[1749,1753,1756],[],[[1745,18],[1750,20],[1755,22],[1759,22]]],[1864,1889,[1868,1876,1878],[],28],[1946,1978,every(1946,1978,4),[],every(1942,1978,5).map(x => [x,20])],[1992,1995,[],[],20],[2002,2035,every(2002,2035,4),[],every(1998,2036,5).map(x => [x,20])],[2094,2142,[2101,2110,2124],[[2112,'Fo',2122]],25,[[2094,2101,'i'],[2124,2142,'o']]],[2202,2206,[],[],22]],
    blobs: [[704,707,14,24],[754,760,6,22],[822,830,2,21],[835,841,2,21],[848,854,2,21],[972,977,2,21],[981,985,2,21],[1017,1021,3,21],[1026,1030,3,21],[1084,1090,3,21],[1433,1445,1,21],[1529,1535,4,21],[1869,1874,2,21],[1880,1885,2,21],[2104,2108,4,20],[2115,2121,4,19]] },
  { n: 'FOL 3', c: '#b88824', in: 'Lpbc12', st: 1, f: '#346a14', t: '#30411f', w: '#80b858', u: '#70a840', clips: [
    [534,566,[541,549],[],26,[[534,541,'i'],[549,566,'o']]],[579,760,[591,670,716],[[594,'Foley rolling ca',669,1],[673,'Foley ro',714,1]],[[580,23],[592,20],[655,20],[667,19],[670,18],[760,18]],[[579,591,'i'],[716,760,'co']]],[765,775,[771],[],26],[850,856,[],[],23],[936,944,[],[],23],[955,962,[958],[],18],[1003,1026,[],[[1006,'Fole',1024]],23],[1062,1099,[1093],[[1065,'Foley',1092]],25],[1110,1116,[1113],[],21],[1120,1126,[],[],23],[1160,1171,[1167],[],29],[1421,1457,[1424,1452],[[1426,'Foley',1451]],26],[1560,1595,[1592],[[1564,'Foley',1591]],26],[1891,1898,[],[],22],
    [1953,2212,[1963,1993,2011,2017,2037,2044,2056,2193],[[1966,'Foley',1992],[2020,'Fol',2036],[2059,'Foley rustle kite with wind...',0,1]],[[1953,29],[2011,31],[2015,30],[2021,31],[2027,28],[2035,29],[2045,29],[2153,29],[2163,32],[2171,30],[2194,30],[2212,34]],[[1953,1963,'i'],[1993,2011,'o'],[2011,2017,'i'],[2037,2044,'o'],[2044,2056,'i'],[2193,2212,'o']]],
    [2217,2225,[2221],[],29],[2248,2279,[2252],[[2254,'Foley',2278]],[[2248,29],[2269,29],[2272,33],[2275,35]]],[2285,2295,[2287],[],[[2285,33],[2287,28],[2291,36],[2295,36]]],[2325,2363,[2329,2361],[[2331,'Foley',2360]],[[2325,28],[2335,28],[2338,30],[2342,30],[2347,31],[2355,30],[2358,32],[2363,33]]],[2389,2409,[2393,2402],[],[[2389,25],[2398,25],[2403,27],[2406,31]],[[2402,2409,'o']]],[2425,2435,[2427,2431],[],[[2425,24],[2430,25],[2434,36]]]],
    blobs: [[542,547,2,30],[542,547,2,11],[604,618,7,30],[619,636,6,30],[637,656,7,30],[593,668,2,11],[680,708,10,30],[674,714,2,11],[717,745,5,30],[717,740,3,11],[1070,1090,1,30],[2390,2396,2,11],[2390,2396,2,30]] },
  { n: 'FOL 4', c: '#b82c24', in: 'Lpbc12', st: 1, ins: 'P', f: '#481478', t: '#3a2548', w: '#9870c8', clips: [
    [500,589,[521,567],[[524,'foley roll',566,1]],[[500,28],[503,24],[506,20],[517,19],[520,19],[526,14],[527,22],[570,22],[581,24],[589,24]],[[500,521,'ci'],[567,589,'co']]],[619,650,[638,646],[],22,[[619,638,'i'],[646,650,'o']]],[1601,1607,[1604],[],25],[1612,1624,[1613,1622],[],25]], blobs: [[512,516,2,11],[520,526,6,30],[535,542,1,30],[546,562,2,30]] },
  { n: 'FOL 5', c: '#9020b4', in: 'Inpt1-2', st: 1, f: '#801c1c', t: '#4a2626', w: '#c07878', clips: [
    [517,584,[521,565],[[524,'Foley ob',565,1]],[[517,21],[522,22],[526,24],[552,24],[575,32],[584,32]],[[517,521,'i'],[565,584,'co']]]] }];
const sfx = [
  { n: 'SFX 1', c: '#b82090', in: 'Inpt1-2', st: 1, f: '#6e6212', t: '#444026', w: '#c4b468', clips: [
    [688,724,[700,705,708],[],20,[[688,700,'i'],[708,724,'o']]],[725,744,[728,738],[],27,[[728,738,'i']]],
    [772,1145,[794,990,1088,1124],[[797,'SFX water flowing',0,1],[993,'SFX water flowing...',0,1],[1091,'SFX w.',1123,1]],[[772,28],[798,28],[827,28],[837,32],[841,33],[870,33],[887,36],[912,36],[941,37],[1062,37],[1145,37]],[[772,794,'i'],[1124,1145,'o']]],
    [1646,1706,[1656,1698],[[1660,'SFX lea',1697,1]],[[1646,25],[1667,26],[1706,31]],[[1646,1656,'i'],[1698,1706,'o']]],[1848,1901,[1855,1881],[[1860,'SFX',1880]],[[1848,33],[1852,33],[1861,29],[1872,30],[1884,31],[1896,32],[1901,32]],[[1848,1855,'i'],[1881,1901,'o']]],[2212,2232,[2222,2227],[],30,[[2227,2232,'o']]],[2359,2361,[],[],31]], blobs: [[697,701,3,11],[702,706,7,11],[707,711,3,11],[697,701,3,30],[702,706,7,30],[707,711,3,30]] },
  { n: 'SFX 2', c: '#b82c24', in: 'Inpt1-2', st: 1, f: '#26147a', t: '#2e264a', w: '#7c70c8', clips: [
    [1611,1805,[1681,1742],[[1684,'SFX wind',0,1]],[[1611,26],[1634,24],[1675,24],[1716,24],[1727,27],[1742,27],[1805,27]],[[1611,1681,'ci'],[1742,1805,'o']]],
    [2211,2432,[2221,2223,2424],[[2227,'SFX wind-05',0,1]],[2211,2217,2227,2233,2240,2248,2252,2260,2274,2286,2290,2296,2304,2317,2321,2325,2330,2337,2346,2358,2363,2367,2393,2400,2406,2425,2428,2432].map((x, i) => [x,[26,24,20,24,28,31,24,22,24,23,19,21,25,25,24,20,25,25,24,23,27,20,20,20,16,16,22,22][i]]),[[2211,2221,'i'],[2424,2432,'o']]]], blobs: [[2366,2384,1,11],[2366,2384,1,30],[2398,2424,2,11],[2398,2424,2,30]] },
  { n: 'SFX 3', c: '#3cb428', in: 'Input 1', f: '#68125e', t: '#42243f', w: '#c070b8', noline: 1, clips: [[1715,1748,[1719],[],22,[[1715,1719,'i'],[1719,1748,'o']]]] }];
const folders = [
  { n: 'Video REF', c: '#206ca4', k: [] }, { n: 'Music', c: '#b0b028', k: [music] }, { n: 'AMB', c: '#3cb428', k: amb },
  { n: 'DX', c: '#9020b4', k: dx }, { n: 'FOL', c: '#b8242c', k: fol }, { n: 'SFX', c: '#b45a20', k: sfx }];

const X = x => x - ORIGIN;
const rect = (x, y, w, h, f, more = '') => `<rect x="${x}" y="${y}" width="${w}" height="${h}" fill="${f}" ${more}/>`;
const use = (id, w, h) => `<svg width="${w}" height="${h}"><use href="#${id}"/></svg>`;

function grid(stereo, h = 42) {
  let s = rect(0, 0, '100%', 1, '#2a2a2a');
  for (let i = 1; i < 160; i++) s += rect(Math.round(i * PPS), 0, 1, h, '#303030');
  if (stereo) s += rect(0, 20, '100%', 1, '#3c3c3c');
  for (const m of markers) s += rect(X(m[0]), 0, 1, h, C[m[1]]);
  return s;
}
function blob([a, b, amp, y, col], w) {
  let up = '', dn = '';
  for (let x = a; x <= b; x++) {
    const e = Math.sin(Math.PI * (x - a + .5) / (b - a + 1)), v = Math.max(.5, amp * (.3 + .7 * Math.abs(Math.sin(x * 1.7) * Math.cos(x * .63))) * (.4 + .6 * e));
    up += `L${X(x)} ${(y - v).toFixed(1)}`; dn = `L${X(x)} ${(y + v).toFixed(1)}` + dn;
  }
  return `<path d="M${X(a)} ${y}${up}${dn}z" fill="${col || w}"/>`;
}
function fade([a, b, k], stereo) {
  a = X(a); b = X(b);
  const seg = (t, h) => {
    const p = { i: `M${a} ${t + h}L${b} ${t}`, o: `M${a} ${t}L${b} ${t + h}`, ci: `M${a} ${t + h}Q${b - 4} ${t + h} ${b} ${t}`, co: `M${a} ${t}Q${a + 6} ${t + h} ${b} ${t + h}` }[k];
    return `<path d="${p}" fill="none" stroke="#7ca088"/>`;
  };
  return stereo ? seg(2, 18) + seg(21, 18) : seg(2, 37);
}
function trackLane(t) {
  let s = grid(t.st), lab = '', top = '';
  const ys = t.st ? [11, 30] : [21];
  for (const [a, b, sp, ls = [], au, fd = [], dbs = [], o = {}] of t.clips) {
    s += rect(X(a), 1, b - a, 40, o.t || t.t);
    for (let i = 1; i < 160; i++) { const g = Math.round(i * PPS); if (g > X(a) && g < X(b)) s += rect(g, 2, 1, 38, '#fff', 'opacity=".13"'); }
    if (t.st) s += rect(X(a), 20, b - a, 1, '#fff', 'opacity=".2"');
    if (!t.noline) for (const y of ys) s += rect(X(a), y, b - a, 1, t.w);
    for (const f of fd) s += fade(f, t.st);
    for (const p of sp) s += rect(X(p), 2, 1, 38, '#94a8ac') + rect(X(p) + 1, 2, 1, 38, '#000');
    s += `<rect x="${X(a) + .5}" y="1.5" width="${b - a - 1}" height="39" fill="none" stroke="#000"/>`;
    s += rect(X(b), 2, 1, 39, '#2a2a2a');
    for (const [x, txt, end, pin] of ls) {
      lab += `<span class="lab" style="left:${X(x) - 1}px;${end ? `max-width:${end - x}px` : ''}">${txt}</span>`;
      if (pin) s += rect(X(x) + 2, 26, 8, 12, '#000', 'opacity=".5"') + `<path d="M${X(x) + 4.5} 28.500h3v3h-3zM${X(x) + 6} 32v5" fill="none" stroke="#d0d0d0"/>`;
    }
    for (const [x, txt, end] of dbs) lab += `<span class="db" style="left:${X(x) - 1}px;${end ? `max-width:${end - x}px` : ''}">${txt}</span>`;
    const pts = typeof au === 'number' ? [[a, au], [b, au]] : au;
    const d = pts.map(p => `${X(p[0])},${p[1]}`).join(' ');
    top += `<polyline points="${d}" fill="none" stroke="#111" stroke-width="4"/><polyline points="${d}" fill="none" stroke="#c8c2c2" stroke-width="2"/>`;
    if (b - a > 4) for (const p of pts.slice(0, -1)) top += `<circle cx="${X(p[0])}" cy="${p[1]}" r="2" fill="#fff" stroke="#111"/>`;
  }
  for (const bl of t.blobs || []) s += blob(bl, t.w);
  return `<svg>${s}</svg>${lab}<svg>${top}</svg>`;
}
function folderLane(f) {
  let s = grid(0);
  if (f.n === 'Video REF') {
    s += rect(0, 1, 1957, 41, '#5a3878', 'opacity=".86"');
    s += rect(0, 1, 1957, 1, '#000') + rect(0, 20, 1957, 1, '#000') + rect(0, 40, 1957, 1, '#000') + rect(1956, 1, 1, 40, '#000');
  }
  const n = f.k.length, h = Math.floor(40 / n);
  f.k.forEach((t, i) => {
    const y = 1 + i * h;
    for (const [a, b, sp, , , , , o = {}] of t.clips) {
      s += rect(X(a), y, b - a, h, o.f || t.f, 'opacity=".9"');
      s += rect(X(a), y, b - a, 1, '#000') + rect(X(a), y + h - 1, b - a, 1, '#000') + rect(X(a), y, 1, h + 1, '#000') + rect(X(b) - 1, y, 1, h + 1, '#000');
      for (const p of sp) s += rect(X(p), y + 1, 1, h - 1, '#889c9c') + rect(X(p) + 1, y + 1, 1, h - 1, '#000');
    }
  });
  return `<svg>${s}</svg>`;
}
const icons = `<div class="icons">${use('i-target', 16, 15)}${use('i-note', 13, 14)}</div>`;
const slots = v => `<div class="ins">${Array.from({ length: 10 }, (_, i) => `<i${v && (i === 0 || i === 5) ? ' class="used"' : ''}>${v && i === 5 ? v : ''}</i>`).join('')}</div>`;
const fader = '<svg width="6" height="10"><path d="M3 0v10M1 3.500h4v3H1z" fill="#444" stroke="#ddd"/></svg>';

function trackRow(t, gc) {
  return `<div class="row trk" style="--c:${t.c}"><div class="hd"><div class="grp" style="--c:${gc}"></div>
  <div class="strip">${use('i-circle', 10, 10)}${use('i-auto', 10, 10)}</div>
  <div class="tname"><h3>${t.n}</h3>${use('i-tri', 6, 5)}<div class="btns"><span class="rism"><button class="rec" aria-label="Record">●</button><button>I</button><button>S</button><button>M</button></span><button class="btn wv">wave</button><button class="btn rd">read</button></div></div>
  <div class="meter"><i></i>${t.st ? '<i></i>' : ''}</div>${slots(t.ins)}
  <div class="io"><div><button class="btn in">${t.in}</button><button class="btn out">Otp12</button><button class="btn fd" aria-label="Output window">${fader}</button></div><div class="disp"><span>0.0</span><u></u>${t.st ? '<span>P</span><span>P</span>' : '<span>▸</span><span>0</span><span>◂</span>'}</div></div>
  ${icons}<div class="scale${t.st ? ' st' : ''}"></div></div><div class="lane">${trackLane(t)}</div></div>`;
}
let rows = '';
for (const f of folders) {
  rows += `<div class="tabrow" style="--c:${f.c}"><i></i><b></b></div>
  <div class="row fold" style="--c:${f.c}"><div class="hd"><div class="strip">${use('i-circle', 10, 10)}${use('i-folder', 10, 10)}</div>
  <div class="fname"><h3>${f.n}</h3><div class="fpanel"><span class="btn sm"><button>S</button><button>M</button></span><button class="btn ov">overview</button></div></div>
  <div class="fsq"><i></i><i></i></div><div class="fins"></div><div class="fio"></div>${icons}<div class="tint"></div></div><div class="lane">${folderLane(f)}</div></div>`;
  rows += f.k.map(t => trackRow(t, f.c)).join('');
  rows += f.k.length ? `<div class="footrow" style="--c:${f.c}"><i></i><b></b></div>` : '<div class="gap1"></div>';
}
rows += `<div class="row trk master" style="--c:#4a0c18"><div class="hd"><div class="strip">${use('i-circle', 10, 10)}${use('i-auto', 10, 10)}</div>
 <div class="tname"><h3>Master 1</h3><div class="btns"><button class="btn clock" aria-label="Timebase">${use('i-clock', 8, 8)}</button><button class="btn vol">volume${use('i-tri', 6, 5)}</button><button class="btn mrd">read${use('i-tri', 6, 5)}</button></div></div>
 <div class="meter"><i></i><i></i></div>${slots('1')}
 <div class="io"><div><button class="btn out">Output 1-2</button><button class="btn fd" aria-label="Output window">${fader}</button></div><div class="disp"><span>vol</span><span>0.0</span></div></div>${icons}<div class="scale"></div></div>
 <div class="lane"><svg>${rect(0, 10, '100%', 32, '#50474a') + grid(0) + rect(0, 9, '100%', 2, '#f06a7c') + rect(0, 11, '100%', 1, '#2a1a1c')}</svg></div></div>`;
document.getElementById('track-rows').innerHTML = rows;

let cl = '';
for (let i = 1; i < 160; i++) cl += rect(Math.round(i * PPS), 2, 1, 13, '#151515');
for (const m of markers) cl += rect(X(m[0]), 0, 1, 15, C[m[1]]);
document.getElementById('cols-lane').innerHTML = `<svg>${cl}</svg>`;

// rulers
const two = n => String(n).padStart(2, '0');
const ticks = {
  min: [5, i => `${Math.floor(i * 5 / 60)}:${two(i * 5 % 60)}`],
  tc: [10, i => `00:${two(Math.floor(i / 6))}:${two(i * 10 % 60)}:00`],
  ft: [20 / 3, i => `${i * 10}+00`],
  sm: [500000 / 48000, i => String(i * 500000)]
};
for (const el of document.querySelectorAll('[data-r]')) {
  const k = el.dataset.r;
  if (k === 'mk') {
    el.innerHTML = markers.map((m, i) => {
      const w = (markers[i + 1] ? markers[i + 1][0] : 2600) - m[0];
      return `<span class="mk" style="left:${X(m[0])}px;width:${w}px;background:${M[m[1]]}">${m[2] || ''}</span>`;
    }).join('') + markers.map(m => `<svg class="dia" style="left:${X(m[0]) - 5}px" width="11" height="12"><path d="M5.500 0L10.500 6 5.500 12 .5 6z" fill="${C[m[1]]}" stroke="#111"/></svg>`).join('');
  } else {
    const [step, fmt] = ticks[k];
    let s = '';
    for (let i = 0; i * step < 137; i++) s += `<span class="tick" style="left:${Math.round(i * step * PPS)}px">${fmt(i)}</span>`;
    el.innerHTML = s;
  }
}

// universe overview
let u = rect(0, 0, 1980, 6, '#222');
markers.forEach((m, i) => { u += rect(X(m[0]), 1, (markers[i + 1] ? markers[i + 1][0] : 2460) - m[0], 4, M[m[1]]); });
markers.forEach(m => { u += `<path d="M${X(m[0]) - 2} 5h5L${X(m[0])} 2z" fill="${C[m[1]]}"/>`; });
[[music, 7], [amb[0], 13], [amb[1], 16], [amb[2], 19], [dx[0], 25], [dx[1], 28], [fol[0], 34], [fol[1], 37], [fol[2], 40]].forEach(([t, y]) => {
  for (const c of t.clips) u += rect(X(c[0]), y, c[1] - c[0] - 1, 2, t.u);
});
document.getElementById('universe').innerHTML = `<svg viewBox="0 0 1980 42" preserveAspectRatio="none">${u}</svg><i class="uscroll"></i>`;

// sidebar list: [name, colour, kind (f folder open, v folder closed, c child, l last child, m master), hidden]
const list = [['VRE','#1496ff','v'],['Musc','#ffff00','f'],['M1','#ff6400','l'],['AMB','#1eff00','f'],['A1','#ff0010','c'],['A2','#ffaa00','c'],['A3','#0032ff','l'],['DX','#b400ff','f'],['A1','#ffaa00','c'],['A2','#ff0010','c'],['A1','#ffff00','c',1],['A2','#ffff00','l',1],['FOL','#ff0010','f'],['F1','#14ff00','c'],['F2','#14d2ff','c'],['F3','#ffaa00','c'],['F4','#ff1e00','c'],['F5','#b400ff','l'],['SFX','#ff6400','f'],['S1','#ff00b4','c'],['S2','#ff1e00','c'],['S3','#32ff00','l'],['Mst1','#b4001e','m']];
const glyph = {
  v: '<path d="M3 1l5 4-5 5z" fill="#b0b0b0"/>', f: '<path d="M2 3h7L5.500 8z" fill="#b0b0b0"/>',
  c: '<path d="M5.500 0v11M5 5.500h10" stroke="#999"/><path d="M9 1l3 4.500L9 10zM11 3l3 2.500L11 8z" fill="#b0b0b0"/>',
  l: '<path d="M5.500 0v6M5 5.500h10" stroke="#999"/><path d="M9 1l3 4.500L9 10zM11 3l3 2.500L11 8z" fill="#b0b0b0"/>',
  m: '<path d="M9 3V1.500H3L6 5.500 3 9.500h6V8" fill="none" stroke="#ff3018" stroke-width="2"/>'
};
document.getElementById('track-list').innerHTML = list.map(([n, c, k, dim]) =>
  `<li><i class="dot${dim ? ' dim' : ''}"></i><i class="sq" style="background:${c}"></i><svg>${glyph[k]}</svg><span class="${k === 'c' || k === 'l' ? 'child' : ''}">${n}</span></li>`).join('');
```
